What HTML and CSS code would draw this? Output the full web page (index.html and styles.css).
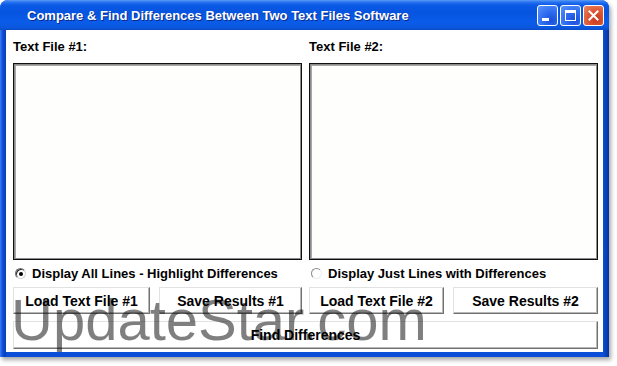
FILE: index.html
```html
<!DOCTYPE html>
<html>
<head>
<meta charset="utf-8">
<link rel="stylesheet" href="styles.css">
</head>
<body>
<div class="window">
  <div class="titlebar">
    <span class="title">Compare &amp; Find Differences Between Two Text Files Software</span>
    <div class="controls">
      <span class="tb-btn min"><span class="min-bar"></span></span>
      <span class="tb-btn max"><span class="max-box"></span></span>
      <span class="tb-btn close">
        <svg width="21" height="21" viewBox="0 0 21 21"><path d="M6.5 6.5 L14.5 14.5 M14.5 6.5 L6.5 14.5" stroke="#fff" stroke-width="2" stroke-linecap="square"/></svg>
      </span>
    </div>
  </div>
  <div class="client">
    <div class="columns">
      <div class="col">
        <div class="label">Text File #1:</div>
        <div class="textbox"></div>
        <div class="radio-row"><span class="radio checked"></span><span>Display All Lines - Highlight Differences</span></div>
        <div class="btn-row left">
          <button class="btn">Load Text File #1</button>
          <button class="btn">Save Results #1</button>
        </div>
      </div>
      <div class="col">
        <div class="label">Text File #2:</div>
        <div class="textbox"></div>
        <div class="radio-row"><span class="radio"></span><span>Display Just Lines with Differences</span></div>
        <div class="btn-row right">
          <button class="btn">Load Text File #2</button>
          <button class="btn">Save Results #2</button>
        </div>
      </div>
    </div>
    <button class="btn find">Find Differences</button>
    <div class="watermark">UpdateStar.com</div>
  </div>
</div>
</body>
</html>
```

FILE: styles.css
```css
html, body {
  margin: 0;
  padding: 0;
  background: #ffffff;
}

body {
  width: 617px;
  height: 366px;
  overflow: hidden;
  font-family: "Liberation Sans", Arial, sans-serif;
}

.window {
  width: 609px;
  height: 357px;
  box-sizing: border-box;
  background: linear-gradient(to right, #3f7ff0 0, #1556e0 2px, #0b45c8 4px, #0a3fb8 6px, #0b4fd8 6px, #0b4fd8 calc(100% - 6px), #0a3cb0 calc(100% - 2px), #082f98 100%);
  border-radius: 8px 8px 0 0;
  box-shadow: 2px 3px 4px rgba(0, 0, 0, 0.35);
  display: flex;
  flex-direction: column;
}

.titlebar {
  height: 30px;
  flex: none;
  display: flex;
  align-items: center;
  padding: 0 5px 0 27px;
  border-radius: 8px 8px 0 0;
  background: linear-gradient(to bottom, #5a9cf8 0, #2a74f0 2px, #0b5ae6 5px, #0654e0 12px, #0a5ce8 22px, #0b58e0 27px, #0a4cc8 30px);
}

.title {
  flex: 1;
  color: #ffffff;
  font-weight: bold;
  font-size: 13px;
  text-shadow: 1px 1px 0 #0a2a8a;
  white-space: nowrap;
  padding-top: 1px;
}

.controls {
  display: flex;
  gap: 2px;
  align-items: center;
}

.tb-btn {
  width: 21px;
  height: 21px;
  box-sizing: border-box;
  border: 1px solid #ffffff;
  border-radius: 3px;
  position: relative;
  display: block;
}

.tb-btn.min, .tb-btn.max {
  background: radial-gradient(circle at 70% 75%, #1a4fd8 0, #2f6cf0 45%, #5a96fa 100%);
}

.tb-btn.close {
  background: radial-gradient(circle at 65% 70%, #c8391c 0, #dc5a34 50%, #ec8a68 100%);
}

.tb-btn.close svg {
  position: absolute;
  left: -1px;
  top: -1px;
}

.min-bar {
  position: absolute;
  left: 4px;
  top: 12px;
  width: 7px;
  height: 3px;
  background: #ffffff;
}

.max-box {
  position: absolute;
  left: 4px;
  top: 4px;
  width: 11px;
  height: 11px;
  box-sizing: border-box;
  border: 1px solid #ffffff;
  border-top-width: 3px;
}

.client {
  flex: 1;
  margin: 0 6px 6px 6px;
  background: #ffffff;
  position: relative;
  padding: 9px 5px 3px 7px;
  box-sizing: border-box;
  display: flex;
  flex-direction: column;
}

.columns {
  display: grid;
  grid-template-columns: 289px 289px;
  column-gap: 7px;
}

.col {
  display: flex;
  flex-direction: column;
}

.label {
  font-size: 13px;
  font-weight: bold;
  line-height: 16px;
  height: 16px;
  color: #000000;
}

.textbox {
  margin-top: 8px;
  height: 197px;
  box-sizing: border-box;
  border: 1px solid #101010;
  background: #fefefd;
  box-shadow: inset 0 0 0 1px #8c8c8c, inset 1px 1px 0 1px #a8a8a8;
}

.radio-row {
  margin-top: 5px;
  height: 16px;
  display: flex;
  align-items: center;
  font-size: 13px;
  font-weight: bold;
  color: #000000;
  white-space: nowrap;
}

.radio {
  width: 11px;
  height: 11px;
  box-sizing: border-box;
  border-radius: 50%;
  margin: 0 6px 0 2px;
  border: 1px solid;
  border-color: #8a8a8a #ededed #ededed #8a8a8a;
  background: #ffffff;
  position: relative;
  flex: none;
}

.radio.checked {
  border-color: #6e6e6e #d8d8d8 #d8d8d8 #6e6e6e;
  box-shadow: inset 1px 1px 0 #303030;
}

.radio.checked::after {
  content: "";
  position: absolute;
  left: 3px;
  top: 3px;
  width: 4px;
  height: 4px;
  border-radius: 50%;
  background: #000000;
}

.btn-row {
  margin-top: 6px;
  display: grid;
  column-gap: 9px;
  height: 27px;
}

.btn-row.left {
  grid-template-columns: 137px 143px;
}

.btn-row.right {
  grid-template-columns: 135px 145px;
}

.btn {
  font-family: "Liberation Sans", Arial, sans-serif;
  font-size: 14px;
  font-weight: bold;
  color: #000000;
  background: #ffffff;
  box-sizing: border-box;
  height: 27px;
  padding: 0;
  margin: 0;
  border: 1px solid;
  border-color: #e2e2e2 #707070 #707070 #e2e2e2;
  box-shadow: inset -1px -1px 0 #b8b8b8;
  white-space: nowrap;
}

.btn.find {
  margin-top: 7px;
  height: 28px;
  width: 585px;
}

.watermark {
  position: absolute;
  left: 5px;
  top: 261px;
  font-family: "Liberation Sans", Arial, sans-serif;
  font-size: 58px;
  line-height: 58px;
  color: rgba(0, 0, 0, 0.5);
  white-space: nowrap;
  pointer-events: none;
}
```
